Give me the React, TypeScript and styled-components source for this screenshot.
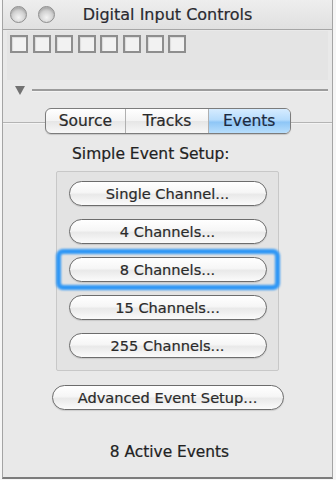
import styled, { createGlobalStyle } from "styled-components";

const GlobalStyle = createGlobalStyle`
    html, body {
        margin: 0;
        padding: 0;
        background: #f6f6f6;
    }
    body {
        font-family: "DejaVu Sans", "Liberation Sans", sans-serif;
        color: #222;
        -webkit-text-stroke: 0.2px;
    }
`;

const Window = styled.div`
    width: 329px;
    height: 477px;
    margin-left: 2px;
    background: #e9e9e9;
    border-left: 1px solid #a4a4a4;
    border-right: 1px solid #a4a4a4;
    border-bottom: 2px solid #7c7c7c;
    display: flex;
    flex-direction: column;
`;

const TitleBar = styled.div`
    height: 29px;
    border-bottom: 1px solid #a6a6a6;
    background: linear-gradient(#eeeeee, #e0e0e0);
    display: grid;
    grid-template-columns: 1fr auto 1fr;
    align-items: center;
`;

const Lights = styled.div`
    display: flex;
    gap: 11px;
    padding-left: 7px;
`;

const Light = styled.span`
    width: 15px;
    height: 15px;
    border-radius: 50%;
    border: 1px solid #8e8e8e;
    background: radial-gradient(circle at 50% 70%, #f4f4f4, #c4c4c4 70%);
    box-shadow: inset 0 2px 2px rgba(0, 0, 0, 0.12);
`;

const Title = styled.div`
    font-size: 16px;
    color: #2a2a30;
`;

const SquaresPanel = styled.div`
    margin: 1px 4px 0 4px;
    height: 49px;
    padding: 4px 0 0 3px;
    box-sizing: border-box;
    background: #e4e4e4;
    display: flex;
    gap: 4.6px;
    align-items: flex-start;
`;

const Square = styled.span`
    width: 14px;
    height: 14px;
    border: 2px solid #8e8e8e;
    background: #f2f2f2;
    box-shadow: inset 1px 1px 1px rgba(0, 0, 0, 0.1);
`;

const Disclosure = styled.div`
    height: 20px;
    display: flex;
    align-items: center;
    gap: 7px;
    padding: 0 4px 0 12px;
`;

const Triangle = styled.span`
    width: 0;
    height: 0;
    border-left: 5px solid transparent;
    border-right: 5px solid transparent;
    border-top: 9px solid #727272;
    margin-top: 1px;
`;

const Rule = styled.span`
    flex: 1;
    height: 2px;
    background: #9c9c9c;
    border-bottom: 1px solid #f4f4f4;
`;

const Tabs = styled.div`
    margin: 8px auto -12px;
    position: relative;
    z-index: 1;
    width: 246px;
    height: 26px;
    box-sizing: border-box;
    border: 1px solid #7c7c7c;
    border-radius: 6px;
    overflow: hidden;
    display: flex;
    background: linear-gradient(#ffffff, #f3f3f3 50%, #e6e6e6 51%, #f7f7f7);
    box-shadow: 0 1px 1px rgba(0, 0, 0, 0.15);
`;

const Tab = styled.div<{ $active?: boolean; $w: number }>`
    width: ${(p) => p.$w}px;
    display: flex;
    align-items: center;
    justify-content: center;
    font-size: 15.5px;
    color: ${(p) => (p.$active ? "#1c2a40" : "#2a2a2a")};
    border-left: 1px solid #b0b0b0;
    &:first-child {
        border-left: none;
    }
    background: ${(p) =>
        p.$active
            ? "linear-gradient(#d6ecff, #b6dcfc 45%, #8ec6f6 55%, #b8defc)"
            : "transparent"};
`;

const TabBox = styled.div`
    flex: 1;
    border-top: 1px solid #b4b4b4;
    box-shadow: inset 0 1px 0 #f4f4f4;
    display: flex;
    flex-direction: column;
    align-items: center;
    padding-top: 22px;
`;

const Label = styled.div`
    width: 223px;
    box-sizing: border-box;
    padding-left: 15px;
    font-size: 15.5px;
    height: 18px;
    margin-left: 2px;
`;

const GroupBox = styled.div`
    margin-top: 8px;
    width: 223px;
    box-sizing: border-box;
    border: 1px solid #c8c8c8;
    border-radius: 2px;
    background: #e3e3e3;
    display: flex;
    flex-direction: column;
    align-items: center;
    gap: 13px;
    padding: 9px 0 12px;
`;

const Button = styled.div<{ $w: number; $focus?: boolean }>`
    position: relative;
    width: ${(p) => p.$w}px;
    height: 25px;
    box-sizing: border-box;
    border: 1.5px solid #6c6c6c;
    border-radius: 13px;
    background: linear-gradient(#ffffff, #f6f6f6 45%, #e9e9e9 55%, #fbfbfb);
    box-shadow: 0 1px 1px rgba(0, 0, 0, 0.12);
    display: flex;
    align-items: center;
    justify-content: center;
    font-size: 14.6px;
    color: #2a2a2a;
    &::after {
        content: "";
        display: ${(p) => (p.$focus ? "block" : "none")};
        position: absolute;
        inset: -9px -14px;
        border: 5px solid #2f97f5;
        border-radius: 7px;
        filter: blur(0.9px);
    }
`;

const Advanced = styled(Button)`
    margin-top: 14px;
`;

const Status = styled.div`
    margin-top: 33px;
    font-size: 15.4px;
    margin-left: 4px;
`;

const channels = ["Single Channel...", "4 Channels...", "8 Channels...", "15 Channels...", "255 Channels..."];

export default function App() {
    return <>
        <GlobalStyle />
        <Window>
            <TitleBar>
                <Lights>
                    <Light />
                    <Light />
                </Lights>
                <Title>Digital Input Controls</Title>
                <span />
            </TitleBar>
            <SquaresPanel>
                {Array.from({ length: 8 }).map((_, i) => <Square key={i} />)}
            </SquaresPanel>
            <Disclosure>
                <Triangle />
                <Rule />
            </Disclosure>
            <Tabs>
                <Tab $w={81}>Source</Tab>
                <Tab $w={83}>Tracks</Tab>
                <Tab $w={82} $active>Events</Tab>
            </Tabs>
            <TabBox>
                <Label>Simple Event Setup:</Label>
                <GroupBox>
                    {channels.map((c) => (
                        <Button key={c} $w={198} $focus={c === "8 Channels..."}>{c}</Button>
                    ))}
                </GroupBox>
                <Advanced $w={232}>Advanced Event Setup...</Advanced>
                <Status>8 Active Events</Status>
            </TabBox>
        </Window>
    </>
}
